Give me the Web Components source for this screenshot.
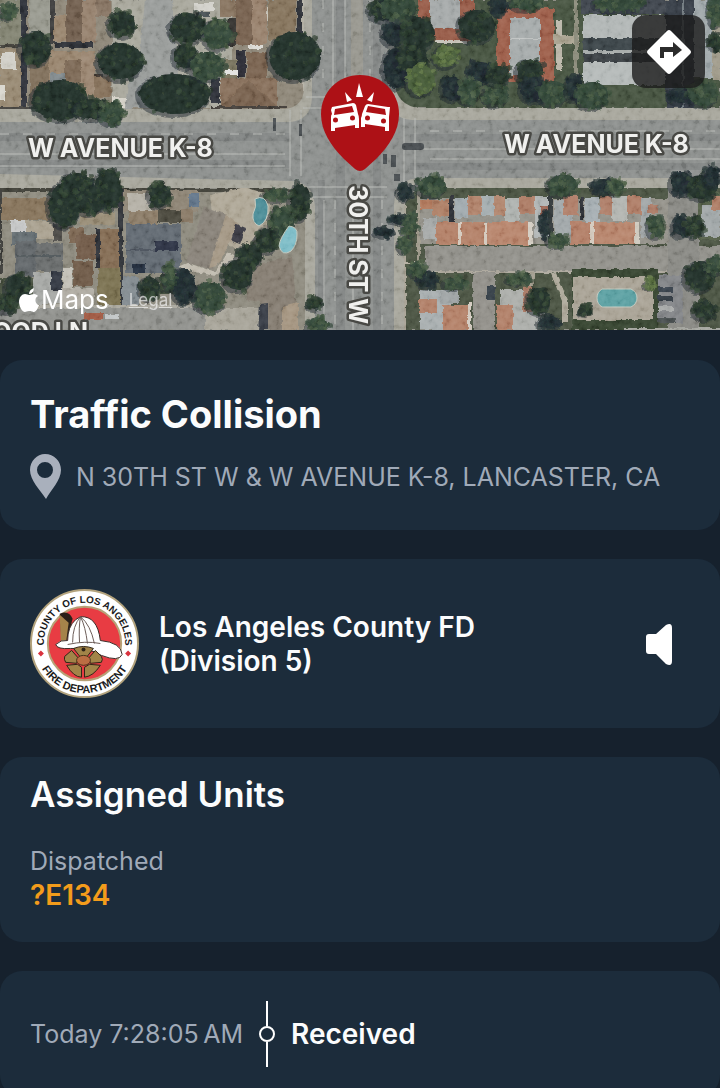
<!DOCTYPE html>
<html lang="en">
<head>
<meta charset="utf-8">
<meta name="viewport" content="width=device-width, initial-scale=1">
<title>Traffic Collision</title>
<style>
    body {
        margin: 0;
        background: #16212d;
        font-family: Inter, "Liberation Sans", sans-serif;
        color: #fbfcfd;
    }
</style>
</head>
<body>
<incident-page>
    <aerial-map slot="map"></aerial-map>
    <info-card>
        <incident-summary>
            <span slot="title">Traffic Collision</span>
            <span slot="address">N 30TH ST W &amp; W AVENUE K-8, LANCASTER, CA</span>
        </incident-summary>
    </info-card>
    <info-card>
        <agency-row>
            <span slot="name">Los Angeles County FD</span>
            <span slot="division">(Division 5)</span>
        </agency-row>
    </info-card>
    <info-card class="units">
        <unit-list>
            <span slot="title">Assigned Units</span>
            <span slot="status">Dispatched</span>
            <span slot="unit">?E134</span>
        </unit-list>
    </info-card>
    <info-card>
        <timeline-row>
            <time slot="time">Today 7:28:05&#8239;AM</time>
            <span slot="event">Received</span>
        </timeline-row>
    </info-card>
</incident-page>

<script>
(function() {
    function attach(el, html) {
        const template = document.createElement('template');
        template.innerHTML = html;
        el.attachShadow({ mode: 'open' }).appendChild(template.content.cloneNode(true));
    }

    class IncidentPage extends HTMLElement {
        constructor() {
            super();
            attach(this, `
                <style>
                    :host {
                        display: block;
                        height: 100vh;
                        overflow-y: auto;
                        scrollbar-width: none;
                    }
                    main {
                        display: flex;
                        flex-direction: column;
                        gap: 29px;
                        padding: 30px 0;
                    }
                </style>
                <slot name="map"></slot>
                <main><slot></slot></main>
            `);
        }
    }

    class InfoCard extends HTMLElement {
        constructor() {
            super();
            attach(this, `
                <style>
                    :host {
                        display: block;
                        padding: 30px;
                        border-radius: 22px;
                        background: #1c2c3b;
                    }
                    :host(.units) {
                        padding-top: 15px;
                    }
                </style>
                <slot></slot>
            `);
        }
    }

    // [x, y, width, height, fill]
    const blocks = [
        // upper left lots
        [0, 0, 310, 112, '#918a7b'], [0, 0, 22, 45, '#858674'], [112, 0, 120, 108, '#aaa99e'],
        [29, 0, 24, 40, '#9a9b91'], [30, 55, 20, 50, '#83735f'], [0, 48, 24, 60, '#9a8c76'],
        [21, 0, 6, 109, '#343941'], [50, 0, 5, 44, '#41413f'], [55, 42, 38, 6, '#33363a'],
        [0, 44, 22, 3, '#4d4b45'], [0, 107, 120, 3, '#4b4a44'],
        [54, 15, 14, 26, '#9b8872'], [66, 0, 18, 42, '#756452'], [82, 0, 14, 42, '#988471'], [96, 0, 15, 16, '#8b7967'],
        [49, 51, 46, 30, '#9b8872'], [64, 60, 18, 36, '#806d5a'], [81, 52, 14, 44, '#9d8974'], [94, 76, 17, 21, '#89745f'],
        [94, 74, 9, 3, '#4a4037'], [50, 73, 15, 14, '#858d90'],
        [1, 53, 15, 16, '#d2d0c9'], [0, 85, 5, 16, '#dad8d0'],
        [112, 97, 31, 10, '#d5d2c9'],
        [194, 3, 20, 8, '#d3d2cc'], [196, 12, 14, 5, '#4e5558'],
        [220, 0, 16, 17, '#8a7764'], [236, 0, 17, 45, '#7a6553'], [252, 0, 15, 45, '#9b8571'], [227, 18, 9, 28, '#3d3a39'],
        [267, 7, 9, 14, '#c6c2b7'], [268, 0, 28, 40, '#887761'], [248, 45, 15, 4, '#dddbd5'],
        [236, 50, 10, 27, '#30333b'], [247, 52, 20, 28, '#7b6653'], [221, 78, 56, 28, '#8a735e'], [222, 60, 15, 18, '#7d7864'],
        [224, 70, 14, 5, '#e3e3e0'], [211, 78, 9, 25, '#34393f'], [211, 106, 76, 3, '#46433d'],
        [297, 0, 5, 35, '#33363a'], [302, 0, 10, 92, '#b3b0a4'],
        // upper right apartments
        [395, 0, 325, 108, '#4c5844'], [418, 0, 57, 41, '#9a604e'], [430, 0, 30, 28, '#a7abab'], [436, 40, 30, 3, '#c9c5bb'],
        [497, 8, 57, 74, '#a06350'], [510, 18, 30, 57, '#a8adad'], [510, 38, 30, 1, '#c1c4c3'],
        [556, 20, 6, 50, '#bcb8ab'], [553, 35, 26, 9, '#aba593'], [574, 0, 4, 88, '#8e8e7e'],
        [500, 0, 8, 8, '#59634e'], [581, 0, 85, 14, '#454b52'],
        [583, 15, 83, 23, '#b3b8b7'], [583, 38, 83, 12, '#41484e'], [583, 50, 83, 3, '#a9adac'],
        [583, 53, 83, 9, '#3f454a'], [583, 62, 83, 23, '#b6bbba'],
        [666, 0, 28, 108, '#3b424b'], [682, 0, 2, 108, '#767f84'], [694, 0, 18, 78, '#a3abad'], [712, 0, 8, 80, '#a29d8d'],
        // lower left lots
        [0, 188, 310, 142, '#908d81'], [0, 188, 300, 4, '#44443d'], [0, 198, 50, 22, '#8a7861'],
        [118, 190, 5, 118, '#35383c'], [0, 190, 2, 85, '#41403d'],
        [11, 220, 15, 12, '#c8c9c9'], [26, 221, 28, 18, '#aba392'], [53, 224, 9, 17, '#51504b'],
        [12, 232, 25, 13, '#687174'], [15, 241, 21, 35, '#656b6d'], [36, 243, 27, 28, '#6d7070'], [16, 255, 45, 2, '#555b5e'],
        [33, 272, 28, 32, '#a8aaa7'], [51, 271, 11, 19, '#383d46'], [63, 268, 9, 32, '#c4c1b8'],
        [0, 278, 33, 30, '#4e5645'], [80, 212, 35, 13, '#9b907a'],
        [69, 228, 15, 15, '#7f6b57'], [76, 234, 20, 25, '#745f4d'], [99, 229, 20, 39, '#876f59'], [96, 229, 4, 39, '#33343b'],
        [73, 261, 20, 25, '#735e4d'], [98, 268, 22, 38, '#7e7454'], [61, 288, 33, 20, '#b2aea5'],
        [123, 190, 75, 22, '#908778'], [128, 193, 24, 18, '#b6b2a8'], [129, 211, 29, 13, '#8f806c'],
        [126, 224, 55, 49, '#656d75'], [126, 249, 36, 2, '#515962'], [155, 241, 23, 10, '#303948'], [132, 264, 13, 9, '#2b3545'],
        [158, 210, 24, 13, '#4f4e42'], [181, 209, 12, 14, '#8b7b69'], [189, 193, 10, 14, '#65788c'],
        [160, 274, 16, 20, '#3f4b3a'], [122, 277, 17, 32, '#868e93'],
        [0, 308, 245, 22, '#92938f'], [0, 305, 205, 3, '#acaaa1'], [205, 308, 60, 22, '#a9a69b'],
        [84, 313, 19, 6, '#a45f49'], [105, 314, 14, 5, '#c2c6c7'],
        // lower right lots
        [402, 188, 318, 142, '#4f5946'], [400, 188, 6, 142, '#aaa598'],
        [420, 199, 248, 45, '#96948c'], [418, 200, 16, 10, '#b27b61'],
        [423, 218, 14, 22, '#a9acab'], [432, 200, 17, 16, '#b0836b'], [449, 196, 5, 26, '#30343b'],
        [455, 198, 13, 20, '#a2abaf'], [468, 196, 14, 20, '#b38770'], [482, 196, 12, 20, '#a6afb1'],
        [494, 196, 11, 20, '#b38972'], [505, 198, 14, 24, '#b0b4b1'], [519, 196, 16, 18, '#af806a'],
        [535, 196, 13, 42, '#b3b7b7'], [540, 206, 12, 8, '#a06d5c'], [548, 196, 5, 46, '#353a3c'],
        [554, 200, 18, 36, '#a4aaac'], [563, 196, 15, 19, '#b1816c'], [580, 197, 4, 23, '#31353a'],
        [585, 197, 14, 25, '#a9b1b5'], [600, 196, 13, 19, '#b0816c'], [612, 196, 15, 25, '#b4b6b2'],
        [627, 196, 14, 18, '#b0806a'], [641, 198, 10, 40, '#a3a8a9'], [648, 205, 10, 8, '#ad7e6b'],
        [436, 222, 22, 23, '#b5846c'], [458, 222, 3, 23, '#d5cbbf'], [461, 222, 23, 23, '#b5846c'],
        [484, 222, 3, 23, '#d5cbbf'], [487, 222, 41, 23, '#b98870'], [528, 223, 5, 21, '#d5cfc5'],
        [570, 222, 20, 22, '#b5836c'], [590, 222, 4, 22, '#d5cbbf'], [594, 222, 41, 22, '#b98870'], [635, 222, 4, 22, '#d0cbc0'],
        [425, 246, 295, 27, '#94938d'], [430, 271, 290, 2, '#aea99e'], [417, 188, 3, 75, '#a19c8e'],
        [668, 172, 31, 158, '#8c8c87'], [698, 192, 22, 48, '#5a6550'], [702, 205, 18, 32, '#a3a9aa'], [712, 196, 8, 14, '#b08069'],
        [473, 272, 22, 58, '#94928c'], [404, 262, 24, 2, '#b5b0a3'],
        [420, 290, 30, 40, '#aab0b1'], [419, 299, 18, 14, '#b3836c'], [443, 305, 27, 25, '#b5846c'], [468, 303, 3, 27, '#d3cbc1'],
        [440, 291, 19, 12, '#a1a6a7'], [487, 286, 8, 14, '#3b444d'],
        [500, 290, 44, 40, '#aeb0ac'], [497, 305, 16, 25, '#b3836c'], [523, 284, 9, 28, '#aa7b68'],
        [530, 272, 4, 14, '#a49f91'], [572, 269, 86, 61, '#3b4935'], [573, 277, 80, 43, '#aba598'],
        [658, 275, 25, 48, '#85878a'], [624, 328, 96, 2, '#a6a7a1'],
        [658, 287, 15, 5, '#414852'], [658, 296, 15, 5, '#363d45'], [658, 306, 15, 5, '#a9abaa'], [658, 318, 18, 5, '#4f5457']
    ];

    // [points, fill]
    const shapes = [
        ['145,0 172,0 178,74 206,88 206,108 125,108 128,82 140,52', '#9b9e9c'],
        ['221,106 248,80 277,106', '#7c6653'],
        ['210,195 245,187 272,196 270,222 256,231 246,252 215,240', '#b0a999'],
        ['204,206 227,215 220,237 213,270 186,262', '#8b857c'],
        ['226,214 240,225 217,266 209,268', '#a69a88'],
        ['236,224 246,228 240,244 231,241', '#40414a'],
        ['188,263 215,272 228,252 240,258 215,276 176,268', '#c1bcb0'],
        ['247,266 292,257 296,300 293,330 268,330 260,302 247,300', '#888075'],
        ['260,305 268,304 268,330 258,330', '#3a4149'],
        ['282,307 298,303 298,330 282,330', '#a69783'],
        ['428,246 440,246 440,272 434,272 425,262', '#94938d'],
        ['551,274 556,273 568,300 568,322 562,322 562,301', '#b0ab9d']
    ];

    // [cx, cy, rx, ry, hue]; hue picks a palette
    const trees = [
        [36, 48, 17, 19, 0], [60, 100, 30, 22, 0], [92, 109, 18, 12, 0], [112, 113, 14, 13, 1], [122, 24, 15, 14, 0],
        [121, 61, 25, 20, 0], [175, 94, 38, 22, 0], [188, 28, 20, 17, 0], [218, 34, 16, 17, 1], [186, 56, 14, 14, 0],
        [207, 66, 19, 16, 1], [295, 56, 28, 26, 0], [8, 12, 9, 8, 1],
        [385, 10, 17, 13, 0], [398, 8, 20, 15, 1], [393, 34, 12, 13, 2], [396, 68, 14, 22, 2], [417, 34, 20, 19, 0], [412, 59, 18, 14, 0],
        [421, 80, 16, 17, 3], [446, 56, 13, 13, 3], [477, 26, 20, 18, 0], [481, 72, 15, 12, 2], [452, 88, 12, 14, 2],
        [469, 91, 13, 14, 1], [496, 95, 14, 12, 1], [498, 75, 14, 12, 0], [530, 71, 15, 14, 0], [527, 3, 18, 9, 1],
        [535, 90, 16, 14, 2], [553, 93, 17, 14, 1], [575, 88, 10, 15, 2], [592, 95, 18, 15, 1], [620, 3, 28, 10, 1],
        [681, 95, 14, 10, 2], [703, 93, 17, 15, 1], [716, 10, 9, 18, 1], [716, 42, 8, 9, 0], [500, 5, 9, 12, 2],
        [77, 185, 19, 14, 0], [108, 190, 16, 22, 0], [90, 200, 17, 16, 0], [65, 205, 18, 24, 0], [160, 195, 13, 14, 0],
        [300, 202, 12, 20, 0], [282, 222, 14, 16, 1], [268, 240, 13, 14, 0], [250, 256, 14, 14, 0], [238, 275, 17, 17, 0],
        [210, 297, 18, 17, 1], [184, 286, 13, 19, 2], [150, 288, 12, 13, 0], [18, 288, 14, 16, 0], [276, 195, 14, 7, 1],
        [170, 276, 7, 15, 1], [315, 303, 8, 8, 0], [318, 325, 12, 9, 1], [8, 304, 12, 10, 0],
        [405, 192, 9, 9, 2], [432, 186, 16, 12, 1], [384, 232, 11, 6, 2], [398, 219, 10, 5, 2], [410, 225, 9, 12, 1],
        [404, 245, 7, 9, 1], [428, 279, 11, 10, 2], [418, 270, 10, 9, 1], [563, 185, 17, 12, 1], [603, 186, 12, 9, 2],
        [616, 187, 10, 9, 1], [557, 240, 11, 8, 1], [545, 224, 5, 14, 2], [656, 226, 10, 13, 1], [682, 183, 13, 13, 2],
        [702, 187, 17, 14, 0], [681, 226, 10, 12, 2], [695, 226, 11, 12, 0], [539, 301, 13, 15, 0], [520, 279, 14, 6, 1],
        [586, 310, 7, 6, 0], [700, 276, 17, 17, 0], [716, 265, 12, 10, 1], [705, 310, 13, 11, 0], [550, 323, 13, 8, 2],
        [456, 283, 14, 7, 1], [712, 176, 9, 12, 2], [650, 284, 6, 6, 3]
    ];

    const palettes = [
        ['#26342e', '#2f3f30', '#394b38'],
        ['#34483a', '#425641', '#506349'],
        ['#222d33', '#283538', '#2e3c3b'],
        ['#4c603c', '#5c7345', '#6c824e']
    ];

    let seed = 7;
    function rand() {
        seed = (seed * 16807) % 2147483647;
        return seed / 2147483647;
    }

    function drawTree([cx, cy, rx, ry, hue]) {
        const colors = palettes[hue];
        let out = `<ellipse cx="${cx - 2}" cy="${cy + 2}" rx="${rx}" ry="${ry}" fill="#202a2f" opacity=".5"/>`;
        out += `<ellipse cx="${cx}" cy="${cy}" rx="${rx - 2}" ry="${ry - 2}" fill="${colors[0]}"/>`;
        for (let i = 0; i < 44; i++) {
            const a = rand() * Math.PI * 2;
            const d = Math.sqrt(rand());
            const x = Math.round(cx + Math.cos(a) * d * rx);
            const y = Math.round(cy + Math.sin(a) * d * ry);
            out += `<circle cx="${x}" cy="${y}" r="${1 + Math.round(rand() * 2)}" fill="${colors[i % 3]}" opacity=".7"/>`;
        }
        return out;
    }

    class AerialMap extends HTMLElement {
        constructor() {
            super();
            attach(this, `
                <style>
                    :host {
                        display: block;
                        position: relative;
                        overflow: hidden;
                    }
                    .map {
                        display: block;
                        width: 100%;
                        height: auto;
                    }
                    .street {
                        font: 700 25px Inter, "Liberation Sans", sans-serif;
                        fill: #f0f0ee;
                        stroke: #484844;
                        stroke-width: 5px;
                        stroke-linejoin: round;
                        paint-order: stroke;
                    }
                    .directions {
                        position: absolute;
                        top: 15px;
                        right: 15px;
                        display: flex;
                        align-items: center;
                        justify-content: center;
                        width: 73px;
                        height: 73px;
                        padding: 0;
                        border: 0;
                        border-radius: 14px;
                        background: rgba(28, 28, 28, 0.8);
                        cursor: pointer;
                    }
                    .credit {
                        position: absolute;
                        left: 19px;
                        bottom: 14px;
                        display: flex;
                        align-items: center;
                        gap: 2px;
                        font-size: 26px;
                        line-height: 32px;
                        color: #fff;
                    }
                    .credit a {
                        margin-left: 18px;
                        font-size: 17px;
                        color: rgba(240, 240, 240, 0.7);
                    }
                </style>
                <svg class="map" viewBox="0 0 720 330" role="img" aria-label="Aerial map of 30th St W and W Avenue K-8">
                    <defs>
                        <filter id="rough" x="0" y="0" width="100%" height="100%">
                            <feTurbulence type="fractalNoise" baseFrequency=".16" numOctaves="3" seed="4"/>
                            <feDisplacementMap in="SourceGraphic" scale="4" xChannelSelector="R" yChannelSelector="G"/>
                        </filter>
                        <filter id="grain" x="0" y="0" width="100%" height="100%">
                            <feTurbulence type="fractalNoise" baseFrequency=".16" numOctaves="3" seed="9"/>
                            <feColorMatrix values="1 0 0 0 -.25  1 0 0 0 -.25  1 0 0 0 -.25  0 0 0 0 1"/>
                        </filter>
                    </defs>
                    <rect width="720" height="330" fill="#8f8f87"/>
                    <g id="lots" filter="url(#rough)"></g>
                    <g id="roads">
                        <path fill="#a9a89e" d="M0 109h285q18-2 19-20V0h90v80q2 26 26 28h300v80H432q-28 0-28 24v118h-99V212q0-24-26-24H0z"/>
                        <path fill="#8f9290" d="M0 122h290q21-2 22-24V0h76v94q0 24 24 26h308v58H420q-24 0-26 26v126h-79V206q-2-24-24-25L0 174z"/>
                        <path fill="#7e8282" opacity=".6" d="M0 133h290v8H0zm0 27h290v8H0zM410 134h310v7H410zm0 29h310v7H410zM336 0h9v330h-9zm37 0h8v330h-8zM318 180h7v150h-7z"/>
                        <path fill="#9d9b90" opacity=".7" d="M351 0h12v100h-12z"/>
                        <g fill="none" stroke="#b9bbb7" stroke-width="1">
                            <path d="M345 0v110M353 200v130M333 0v95M324 200v130M0 154h285M430 159h290M0 166h285M415 149h305"/>
                            <path stroke-dasharray="9 14" d="M323 0v90M370 0v80M382 200v130M335 200v130M0 134h285M430 131h290"/>
                            <path d="M306 97h90M303 108h90M290 110v66M301 110v66M404 118v65M415 118v60M307 187h80M307 197h80"/>
                        </g>
                        <g fill="#4c5154">
                            <rect x="402" y="143" width="22" height="7" rx="3"/>
                            <rect x="383" y="154" width="4" height="10"/>
                            <rect x="391" y="155" width="5" height="12"/>
                            <rect x="394" y="174" width="6" height="7"/>
                            <rect x="273" y="118" width="3" height="13"/>
                            <rect x="299" y="124" width="3" height="12"/>
                        </g>
                    </g>
                    <g id="trees" filter="url(#rough)"></g>
                    <g fill="#51909a" stroke="#c3cac0" stroke-width="1">
                        <path d="M255 199q10-5 13 7 1 15-9 20-7-3-6-12 4-7 2-15z"/>
                        <path fill="#82bfc9" d="M289 226q9 1 8 9 0 10-6 16-9 6-12-5 1-8 10-20z"/>
                        <path fill="#60a3a5" d="M602 289h29q6 3 6 9t-6 9h-29q-5-3-5-9t5-9z"/>
                    </g>
                    <rect width="720" height="330" filter="url(#grain)" opacity=".3" style="mix-blend-mode:soft-light"/>

                    <text class="street" x="28" y="157">W AVENUE K-8</text>
                    <text class="street" x="504" y="153">W AVENUE K-8</text>
                    <text class="street" transform="translate(349 185) rotate(90)">30TH ST W</text>
                    <text class="street" x="88" y="341" text-anchor="end">OOD LN</text>

                    <path fill="#ad1116" d="M360 75c22 0 39 17 39 39 0 17-10 32-23 45l-11 10q-5 4-10 0l-11-10c-13-13-23-28-23-45 0-22 17-39 39-39z"/>
                    <g fill="#fff">
                        <path d="M359 83l4 14h-7zM345 92l7 8-5 2zM374 92l-2 10-5-2z"/>
                        <path fill-rule="evenodd" d="M332 107l21-4q2 0 3 2l2 9q1 2 1 5v9h-4v-3l-20 3v3h-4v-14q0-2 1-3l-1-4zm3 2l-1 6 20-3-2-6zM333 120a2.500 2.500 0 1 0 5 0 2.500 2.500 0 1 0-5 0zM350 118a2.500 2.500 0 1 0 5 0 2.500 2.500 0 1 0-5 0z"/>
                        <path fill-rule="evenodd" d="M388 107l-20-3q-2 0-3 2l-3 8q0 2-1 4v9h4v-3l20 3v4h4v-14l1-10zm-3 2l1 6-20-3 2-6zM365 118a2.500 2.500 0 1 0 5 0 2.500 2.500 0 1 0-5 0zM381 121a2.500 2.500 0 1 0 5 0 2.500 2.500 0 1 0-5 0z"/>
                    </g>
                </svg>
                <div class="credit">
                    <svg width="20" height="24" viewBox="0 0 20 24" fill="currentColor" aria-hidden="true">
                        <path d="M10 7c2 0 3-1 5-1 2 0 3 1 4 2-4 2-3 8 1 9-1 3-3 7-5 7-2 0-2-1-5-1-2 0-3 1-4 1-3 0-6-6-6-10 0-5 3-8 6-8 2 0 3 1 4 1zM10 6c0-3 2-5 5-6 0 3-2 6-5 6z"/>
                    </svg>
                    <span>Maps</span>
                    <a href="#legal">Legal</a>
                </div>
                <button class="directions" type="button" aria-label="Directions">
                    <svg width="46" height="46" viewBox="0 0 46 46" aria-hidden="true">
                        <path fill="#fff" d="M21 2q2-2 4 0l19 19q2 2 0 4L25 44q-2 2-4 0L2 25q-2-2 0-4z"/>
                        <path fill="#2b2b2b" d="M14 29V18h13v-5l9 8-9 7v-5h-9v6z"/>
                    </svg>
                </button>
            `);
        }

        connectedCallback() {
            this.shadowRoot.getElementById('lots').innerHTML =
                blocks.map(([x, y, w, h, fill]) => `<rect x="${x}" y="${y}" width="${w}" height="${h}" fill="${fill}"/>`).join('') +
                shapes.map(([points, fill]) => `<polygon points="${points}" fill="${fill}"/>`).join('');
            this.shadowRoot.getElementById('trees').innerHTML = trees.map(drawTree).join('');
        }
    }

    class IncidentSummary extends HTMLElement {
        constructor() {
            super();
            attach(this, `
                <style>
                    :host {
                        display: flex;
                        flex-direction: column;
                        gap: 16px;
                    }
                    h1 {
                        margin: 0;
                        font-size: 38px;
                        font-weight: 700;
                        line-height: 48px;
                    }
                    .address {
                        display: flex;
                        align-items: center;
                        gap: 15px;
                        font-size: 25px;
                        line-height: 46px;
                        color: #a0aab8;
                    }
                    svg {
                        flex: none;
                    }
                </style>
                <h1><slot name="title"></slot></h1>
                <div class="address">
                    <svg width="31" height="46" viewBox="0 0 31 46" aria-hidden="true">
                        <path fill="#a9b0bc" fill-rule="evenodd" d="M15 0c9 0 16 7 16 16 0 10-10 20-15 29C10 36 0 26 0 16 0 7 7 0 15 0zm0 8a8 8 0 1 0 0 16 8 8 0 1 0 0-16z"/>
                    </svg>
                    <slot name="address"></slot>
                </div>
            `);
        }
    }

    class AgencyRow extends HTMLElement {
        constructor() {
            super();
            attach(this, `
                <style>
                    :host {
                        display: flex;
                        align-items: center;
                        gap: 20px;
                    }
                    .seal {
                        flex: none;
                    }
                    .seal text {
                        font: 700 10px "Liberation Sans", sans-serif;
                        fill: #1b1b1b;
                    }
                    .seal .lower {
                        font-size: 11px;
                    }
                    h2 {
                        flex: 1;
                        display: flex;
                        flex-direction: column;
                        margin: 0;
                        font-size: 28px;
                        font-weight: 600;
                        line-height: 34px;
                    }
                    button {
                        display: flex;
                        padding: 15px;
                        border: 0;
                        background: none;
                        color: #fff;
                        cursor: pointer;
                    }
                </style>
                <svg class="seal" width="109" height="109" viewBox="0 0 110 110" role="img" aria-label="Fire department seal">
                    <defs>
                        <path id="top" d="M14 55a41 41 0 0 1 82 0"/>
                        <path id="bottom" d="M5 55a50 50 0 0 0 100 0"/>
                    </defs>
                    <circle cx="55" cy="55" r="54" fill="#fff" stroke="#b3a37d" stroke-width="2"/>
                    <circle cx="55" cy="55" r="37" fill="#e83c43" stroke="#b7a176" stroke-width="2"/>
                    <path fill="#d9323d" d="M11 62l3 3-3 3-3-3zM99 62l3 3-3 3-3-3z"/>
                    <text text-anchor="middle"><textPath href="#top" startOffset="50%">COUNTY OF LOS ANGELES</textPath></text>
                    <text class="lower" text-anchor="middle"><textPath href="#bottom" startOffset="50%">FIRE DEPARTMENT</textPath></text>
                    <path fill="#292019" d="M30 25q9-4 13 5l-7 27h-4z"/>
                    <path fill="#a5834a" d="M30 26l9 8-3 23-5-4z"/>
                    <path fill="#fff" stroke="#3a2b26" stroke-width="1" d="M26 56q5-5 12-4 0-14 8-21l5-3q17-1 20 24 21 2 22 14-3 8-21 1-12-8-31-7-14 1-15-4z"/>
                    <path fill="none" stroke="#6b5c57" stroke-width="1" d="M51 28q-8 9-8 26M51 28q-2 10-1 26M51 28q5 10 7 27M51 28q10 8 14 27M38 56q18-4 33-1"/>
                    <g fill="#a28448" stroke="#302417" stroke-width="1">
                        <path d="M44 60q10-4 20 0l-7 9h-6z"/>
                        <path d="M42 62l7 8-2 5-11-1q-2-3-1-6z"/>
                        <path d="M66 62l-7 8 2 5 11-1q2-3 0-6z"/>
                        <path d="M37 77l11-1 4 3v10q-8 0-15-12z"/>
                        <path d="M71 77l-11-1-5 3v10q9-1 16-12z"/>
                    </g>
                    <ellipse cx="54" cy="72" rx="7" ry="5" fill="#bc6e43" stroke="#493418"/>
                    <circle cx="54" cy="61" r="2" fill="#302417"/>
                </svg>
                <h2><slot name="name"></slot><slot name="division"></slot></h2>
                <button type="button" aria-label="Listen">
                    <svg width="30" height="42" viewBox="0 0 30 42" fill="currentColor" aria-hidden="true">
                        <path d="M4 11h7L21 2q6-3 6 3v33q0 6-6 3L11 31H4q-3 0-3-3V14q0-3 3-3z"/>
                    </svg>
                </button>
            `);
        }
    }

    class UnitList extends HTMLElement {
        constructor() {
            super();
            attach(this, `
                <style>
                    :host {
                        display: block;
                        line-height: 34px;
                    }
                    h2 {
                        margin: 0 0 28px;
                        font-size: 35px;
                        font-weight: 600;
                        line-height: 44px;
                    }
                    .status {
                        font-size: 25px;
                        color: #a0aab8;
                    }
                    .unit {
                        font-size: 28px;
                        font-weight: 600;
                        color: #f39c1b;
                    }
                </style>
                <h2><slot name="title"></slot></h2>
                <div class="status"><slot name="status"></slot></div>
                <div class="unit"><slot name="unit"></slot></div>
            `);
        }
    }

    class TimelineRow extends HTMLElement {
        constructor() {
            super();
            attach(this, `
                <style>
                    :host {
                        display: flex;
                        align-items: center;
                        gap: 15px;
                    }
                    .time {
                        font-size: 25px;
                        color: #a0aab8;
                    }
                    .event {
                        font-size: 28px;
                        font-weight: 600;
                    }
                </style>
                <div class="time"><slot name="time"></slot></div>
                <svg width="18" height="66" viewBox="0 0 18 66" fill="none" stroke="#fff" stroke-width="2" aria-hidden="true">
                    <path d="M9 0v25M9 41v25"/>
                    <circle cx="9" cy="33" r="7"/>
                </svg>
                <div class="event"><slot name="event"></slot></div>
            `);
        }
    }

    customElements.define('incident-page', IncidentPage);
    customElements.define('info-card', InfoCard);
    customElements.define('aerial-map', AerialMap);
    customElements.define('incident-summary', IncidentSummary);
    customElements.define('agency-row', AgencyRow);
    customElements.define('unit-list', UnitList);
    customElements.define('timeline-row', TimelineRow);
})();
</script>
</body>
</html>
